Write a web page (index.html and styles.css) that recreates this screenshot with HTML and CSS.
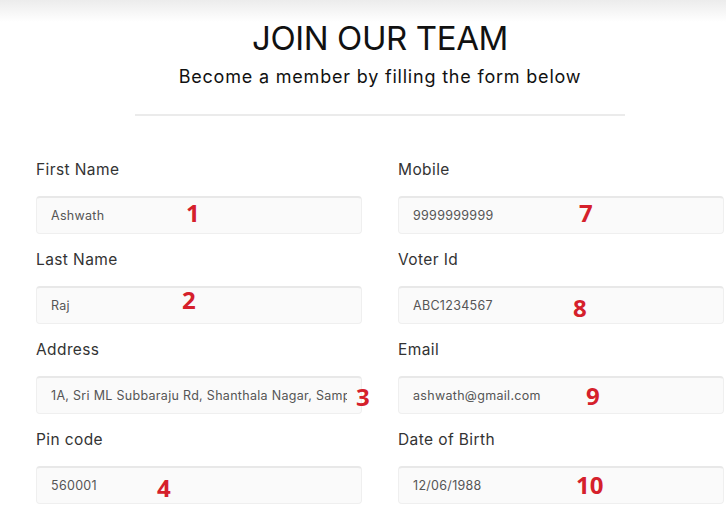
FILE: index.html
```html
<!DOCTYPE html>
<html lang="en">
<head>
  <meta charset="UTF-8" />
  <meta name="viewport" content="width=device-width, initial-scale=1.0" />
  <title>Join Our Team</title>
  <link rel="stylesheet" href="styles.css">
</head>
<body>
  <div class="page">
    <div class="header">
      <h1>JOIN OUR TEAM</h1>
      <p class="subtitle">Become a member by filling the form below</p>
      <hr class="divider" />
    </div>

    <form class="join-form">
      <!-- left column -->
      <div class="field">
        <label for="firstName">First Name</label>
        <div class="input-wrap">
          <input type="text" id="firstName" value="Ashwath" />
          <span class="mark m1">1</span>
        </div>
      </div>
      <div class="field">
        <label for="mobile">Mobile</label>
        <div class="input-wrap">
          <input type="text" id="mobile" value="9999999999" />
          <span class="mark m7">7</span>
        </div>
      </div>

      <div class="field">
        <label for="lastName">Last Name</label>
        <div class="input-wrap">
          <input type="text" id="lastName" value="Raj" />
          <span class="mark m2">2</span>
        </div>
      </div>
      <div class="field">
        <label for="voterId">Voter Id</label>
        <div class="input-wrap">
          <input type="text" id="voterId" value="ABC1234567" />
          <span class="mark m8">8</span>
        </div>
      </div>

      <div class="field">
        <label for="address">Address</label>
        <div class="input-wrap">
          <input type="text" id="address" value="1A, Sri ML Subbaraju Rd, Shanthala Nagar, Sampangi Rama Nagar" />
          <span class="mark m3">3</span>
        </div>
      </div>
      <div class="field">
        <label for="email">Email</label>
        <div class="input-wrap">
          <input type="text" id="email" value="ashwath@gmail.com" />
          <span class="mark m9">9</span>
        </div>
      </div>

      <div class="field">
        <label for="pincode">Pin code</label>
        <div class="input-wrap">
          <input type="text" id="pincode" value="560001" />
          <span class="mark m4">4</span>
        </div>
      </div>
      <div class="field">
        <label for="dob">Date of Birth</label>
        <div class="input-wrap">
          <input type="text" id="dob" value="12/06/1988" />
          <span class="mark m10">10</span>
        </div>
      </div>
    </form>
  </div>
</body>
</html>
```
FILE: styles.css
```css
body {
  margin: 0;
  padding: 0;
  background: linear-gradient(#ececec, #ffffff 22px);
  font-family: Inter, "Open Sans", sans-serif;
  color: #222;
}
.page {
  padding: 0 2px 0 36px;
}
.header {
  text-align: center;
  padding-top: 16px;
}
h1 {
  margin: 0;
  font-size: 33px;
  font-weight: 400;
  line-height: 44px;
  color: #111;
  letter-spacing: -0.4px;
}
.subtitle {
  margin: 5px 0 0;
  font-size: 18px;
  line-height: 24px;
  color: #111;
  letter-spacing: 0.8px;
}
.divider {
  width: 490px;
  margin: 25px auto 0;
  border: none;
  border-top: 2px solid #ebebeb;
}
.join-form {
  display: grid;
  grid-template-columns: 326px 326px;
  column-gap: 36px;
  margin-top: 44px;
}
.field label {
  display: block;
  font-size: 15.5px;
  line-height: 20px;
  color: #333;
  letter-spacing: 0.4px;
}
.input-wrap {
  position: relative;
  margin: 16px 0;
}
.input-wrap input {
  display: block;
  box-sizing: border-box;
  width: 100%;
  height: 38px;
  padding: 0 14px;
  font-family: inherit;
  font-size: 12.5px;
  letter-spacing: 0.3px;
  color: #555;
  background: #fafafa;
  border: 1px solid #efefef;
  border-top: 2px solid #e8e8e8;
  border-radius: 4px;
  outline: none;
}
/* number overlays */
.mark {
  position: absolute;
  font-family: "Open Sans", sans-serif;
  font-weight: 700;
  font-size: 24px;
  line-height: 24px;
  color: #d5202b;
}
.m1 { left: 150px; top: 5px; }
.m2 { left: 146px; top: 2px; }
.m3 { left: 320px; top: 9px; }
.m4 { left: 121px; top: 10px; }
.m7 { left: 181px; top: 5px; }
.m8 { left: 175px; top: 10px; }
.m9 { left: 188px; top: 8px; }
.m10 { left: 178px; top: 7px; }
```
